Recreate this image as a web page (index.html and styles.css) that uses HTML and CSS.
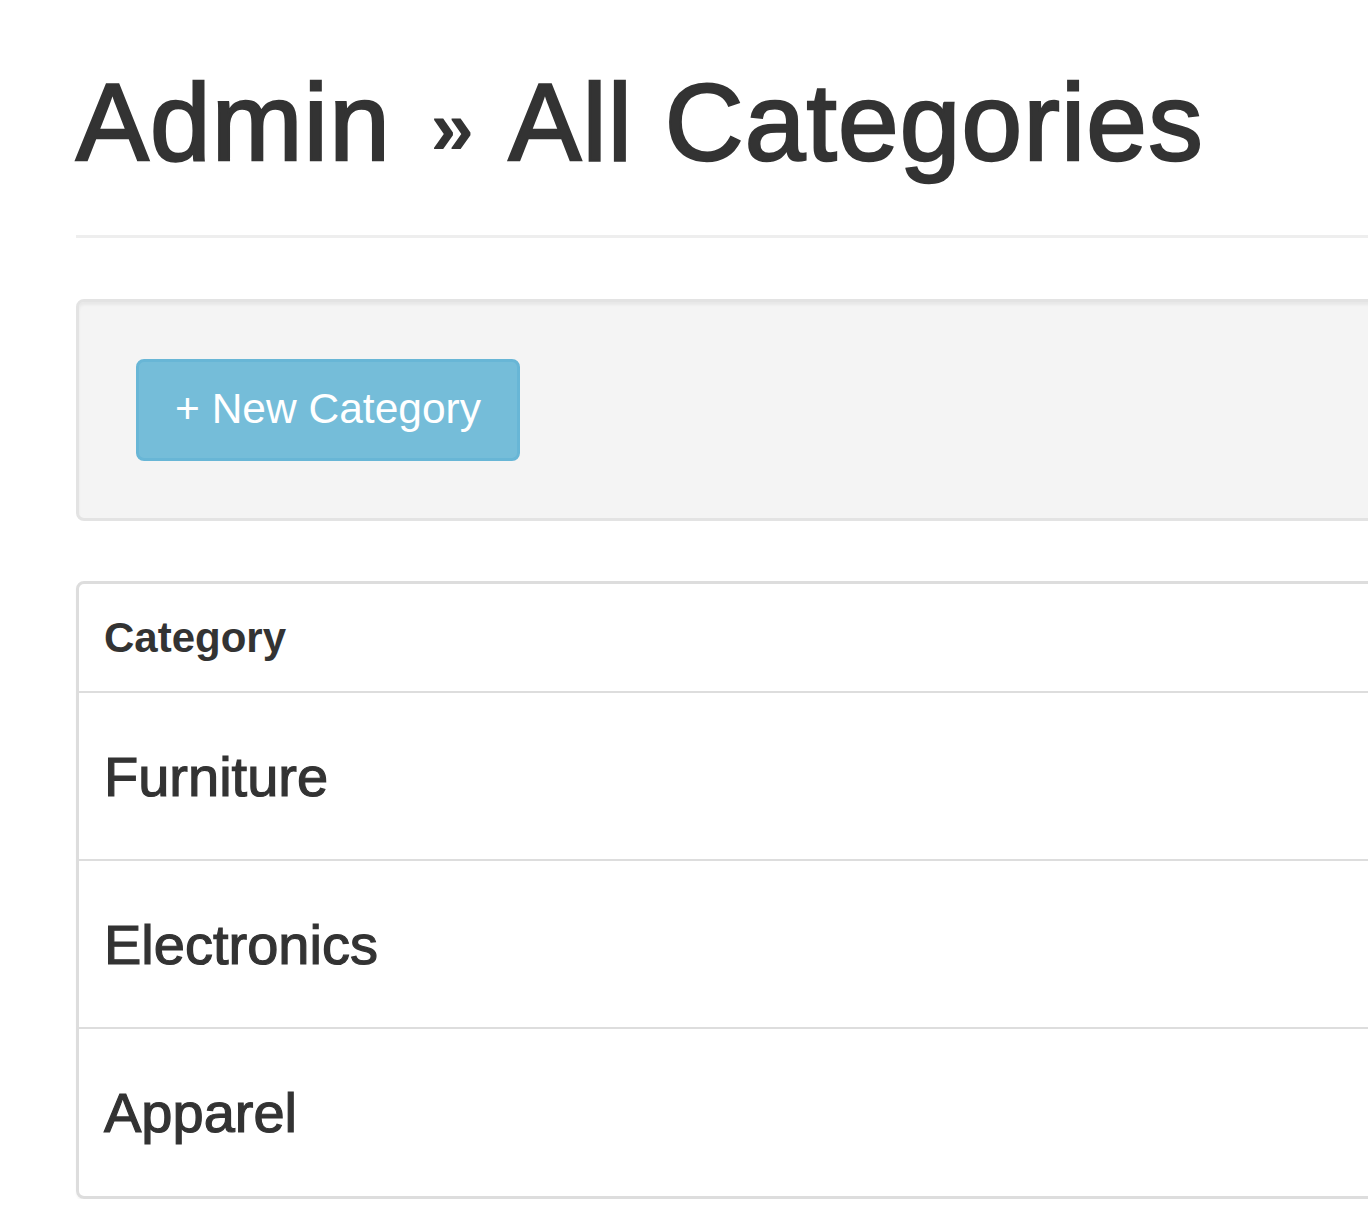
FILE: index.html
```html
<!DOCTYPE html>
<html>
<head>
<meta charset="utf-8">
<link rel="stylesheet" href="styles.css">
</head>
<body>
<div class="page">
  <h1 class="page-header">Admin <span class="sep">&raquo;</span> All Categories</h1>
  <div class="well">
    <a class="btn-info" href="#">+ New Category</a>
  </div>
  <div class="panel">
    <div class="row head">Category</div>
    <div class="row">Furniture</div>
    <div class="row">Electronics</div>
    <div class="row last">Apparel</div>
  </div>
</div>
</body>
</html>
```
FILE: styles.css
```css
html, body {
  margin: 0;
  padding: 0;
  background: #fff;
  overflow-x: hidden;
}
body {
  font-family: "Liberation Sans", Arial, Helvetica, sans-serif;
  color: #333;
}
.page {
  padding-left: 76px;
  width: 1500px;
}
.page-header {
  margin: 62px 0 0 0;
  padding-bottom: 52px;
  font-size: 109px;
  line-height: 121px;
  font-weight: normal;
  border-bottom: 3px solid #eee;
  letter-spacing: 1.2px;
  white-space: nowrap;
  -webkit-text-stroke: 2.4px #333;
}
.sep {
  font-size: 78px;
  line-height: 0;
  font-weight: bold;
  vertical-align: 6px;
  margin: 0 8px;
  -webkit-text-stroke: 0;
}
.well {
  margin-top: 61px;
  background: #f4f4f4;
  border: 3px solid #e3e3e3;
  border-radius: 8px;
  padding: 57px;
  box-shadow: inset 0 3px 3px rgba(0,0,0,0.05);
}
.btn-info {
  display: inline-flex;
  align-items: center;
  justify-content: center;
  box-sizing: border-box;
  width: 384px;
  height: 102px;
  background: #75bdd9;
  border: 3px solid #68b6d6;
  border-radius: 8px;
  color: #fff;
  font-size: 42.5px;
  text-decoration: none;
  padding-bottom: 2px;
}
.panel {
  margin-top: 60px;
  border: 3px solid #ddd;
  border-radius: 8px;
  box-shadow: 0 2px 2px rgba(0,0,0,0.04);
}
.row {
  display: flex;
  align-items: center;
  height: 166px;
  padding-left: 25px;
  font-size: 56px;
  border-bottom: 2px solid #ddd;
  -webkit-text-stroke: 1.2px #333;
}
.row.head {
  height: 107px;
  font-size: 42px;
  font-weight: bold;
  -webkit-text-stroke: 0;
}
.row.last {
  border-bottom: none;
  height: 167px;
}
```
